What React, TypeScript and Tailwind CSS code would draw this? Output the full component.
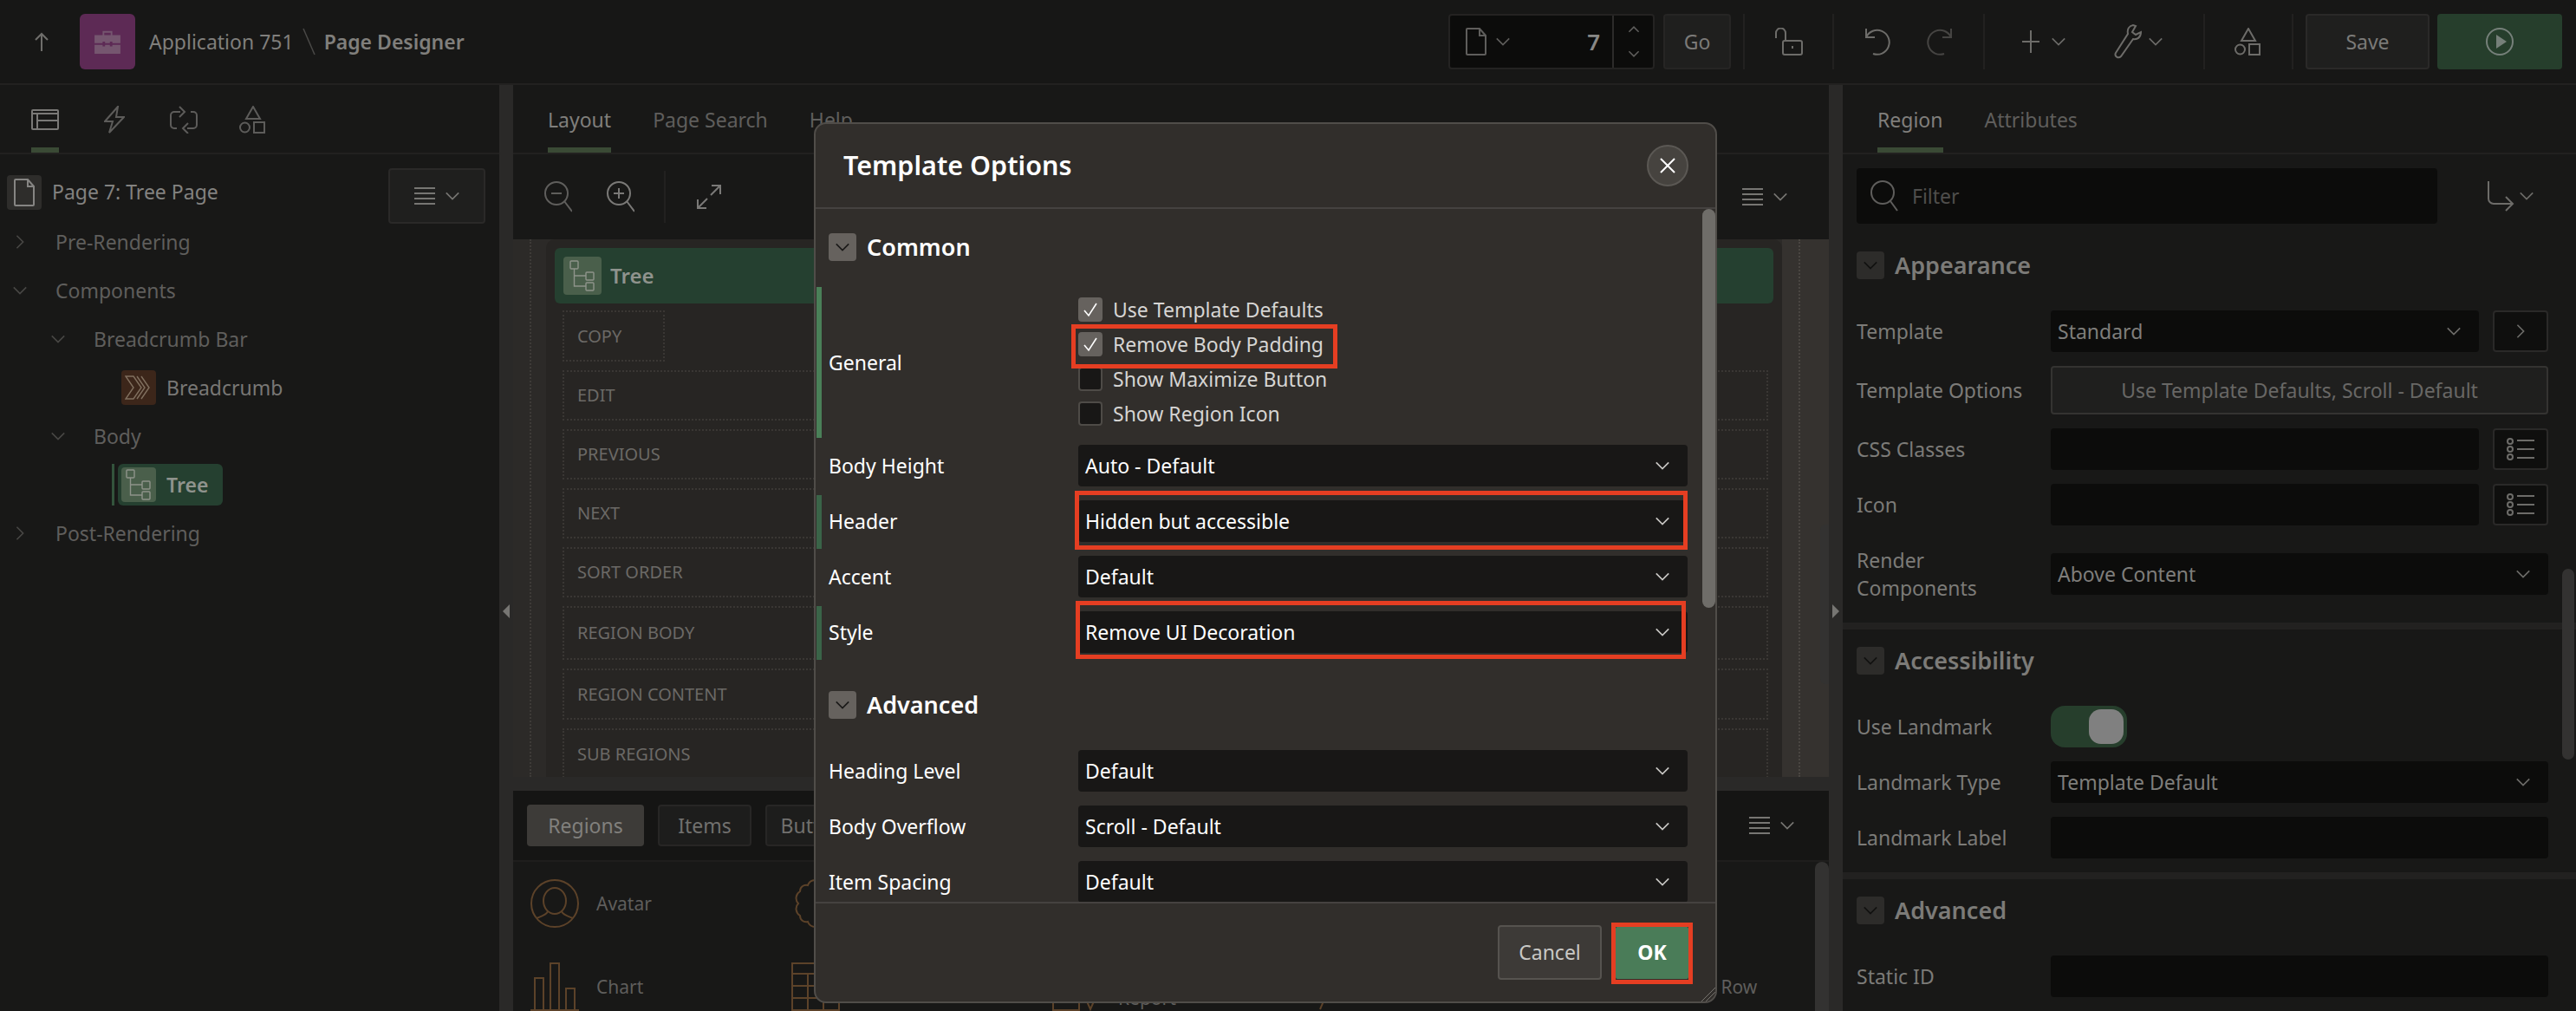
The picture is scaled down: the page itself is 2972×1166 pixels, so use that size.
import type { ReactNode } from "react";

function Chevron({ dir = "down", size = 18, className = "" }: { dir?: "down" | "up" | "right" | "left"; size?: number; className?: string }) {
  const d = {
    down: "M2 6l8 8 8-8",
    up: "M2 14l8-8 8 8",
    right: "M6 2l8 8-8 8",
    left: "M14 2l-8 8 8 8",
  }[dir];
  return (
    <svg width={size} height={size} viewBox="0 0 20 20" fill="none" stroke="currentColor" strokeWidth={size > 16 ? 1.8 : 2.2} className={`shrink-0 ${className}`}>
      <path d={d} />
    </svg>
  );
}

function MenuLines({ className = "" }: { className?: string }) {
  return (
    <svg width="24" height="22" viewBox="0 0 24 22" stroke="currentColor" strokeWidth="2" className={className}>
      <path d="M0 2h24M0 8h24M0 14h24M0 20h24" />
    </svg>
  );
}

function MenuButton({ className = "" }: { className?: string }) {
  return (
    <div className={`flex items-center gap-[11px] text-[#777673] ${className}`}>
      <MenuLines />
      <Chevron />
    </div>
  );
}

function Shapes({ className = "" }: { className?: string }) {
  return (
    <svg width="32" height="32" viewBox="0 0 32 32" fill="none" stroke="currentColor" strokeWidth="2" className={className}>
      <path d="M16 1l8 14H8z" />
      <circle cx="6.5" cy="25" r="5.5" />
      <rect x="17" y="19" width="12" height="12" />
    </svg>
  );
}

function PageGlyph({ className = "" }: { className?: string }) {
  return (
    <svg width="24" height="32" viewBox="0 0 24 32" fill="none" stroke="currentColor" strokeWidth="2" className={className}>
      <path d="M1 2a1 1 0 0 1 1-1h14l7 8v21a1 1 0 0 1-1 1H2a1 1 0 0 1-1-1zM16 1v8h7" />
    </svg>
  );
}

function TreeGlyph() {
  return (
    <svg width="30" height="36" viewBox="0 0 30 36" fill="none" stroke="#8f948b" strokeWidth="1.4">
      <rect x="1" y="1" width="9" height="9" rx="1" />
      <rect x="19" y="14" width="9" height="9" rx="1" />
      <rect x="19" y="26" width="9" height="9" rx="1" />
      <path d="M5.5 10v20H19M5.5 18H19" />
    </svg>
  );
}

function Sep() {
  return <div className="w-[2px] h-[64px] bg-[#222120] shrink-0" />;
}

function Header() {
  return (
    <header className="h-[98px] shrink-0 flex border-b-2 border-[#222120] bg-[#171716]">
      <div className="flex items-center h-[96px] pl-[40px]">
        <svg width="16" height="22" viewBox="0 0 16 22" fill="none" stroke="#6f6e6b" strokeWidth="2">
          <path d="M8 22V2M1 9l7-7 7 7" />
        </svg>
        <div className="ml-[36px] w-[64px] h-[64px] rounded-[6px] bg-[#5d2a55] flex items-center justify-center">
          <svg width="30" height="28" viewBox="0 0 32 30" fill="#75566f">
            <path d="M10 2h12v5h-2V4h-8v3h-2zM0 7h32v10h-10v-2h-3v2h-6v-2h-3v2H0zM0 19h10v2h3v-2h6v2h3v-2h10v11H0z" />
          </svg>
        </div>
        <span className="ml-[16px] text-[23px] text-[#807f7c]">Application 751</span>
        <svg width="18" height="32" viewBox="0 0 18 32" fill="none" stroke="#4a4947" strokeWidth="1.5" className="ml-[9px]">
          <path d="M2 1l13 30" />
        </svg>
        <span className="ml-[8px] text-[23px] font-semibold text-[#807f7c]">Page Designer</span>
      </div>
      <div className="ml-auto flex items-center h-[96px] pr-[16px]">
        <div className="w-[238px] h-[64px] flex rounded-[4px] border-2 border-[#242322] bg-[#0c0c0b]">
          <div className="w-[187px] flex items-center pl-[18px] text-[#5f5e5c]">
            <PageGlyph />
            <Chevron className="ml-[10px]" />
            <span className="ml-auto pr-[14px] text-[26px] font-semibold text-[#898886]">7</span>
          </div>
          <div className="flex-1 border-l-2 border-[#2c2b2a] flex flex-col items-center justify-center gap-[14px] text-[#5f5e5c]">
            <Chevron dir="up" size={14} />
            <Chevron size={14} />
          </div>
        </div>
        <div className="ml-[10px] w-[78px] h-[64px] rounded-[4px] border-2 border-[#262524] bg-[#1f1f1e] flex items-center justify-center text-[23px] text-[#7b7a78]">Go</div>
        <div className="ml-[14px]"><Sep /></div>
        <div className="w-[101px] flex justify-center">
          <svg width="32" height="32" viewBox="0 0 32 32" fill="none" stroke="#6d6c69" strokeWidth="2">
            <path d="M1 12V6a5.5 5.5 0 0 1 11 0v9" />
            <rect x="9" y="15" width="22" height="16" rx="2" />
            <path d="M20 21v3" />
          </svg>
        </div>
        <Sep />
        <div className="w-[172px] flex justify-center gap-[40px]">
          <svg width="30" height="32" viewBox="0 0 30 32" fill="none" stroke="#6d6c69" strokeWidth="2">
            <path d="M1 1v10h10M1 11A14 14 0 1 1 9 30" />
          </svg>
          <svg width="30" height="32" viewBox="0 0 30 32" fill="none" stroke="#454442" strokeWidth="2">
            <path d="M29 1v10H19M29 11A14 14 0 1 0 21 30" />
          </svg>
        </div>
        <Sep />
        <div className="w-[252px] flex items-center pl-[43px] text-[#6d6c69]">
          <svg width="20" height="28" viewBox="0 0 20 28" stroke="currentColor" strokeWidth="2"><path d="M10 1v26M0 14h20" /></svg>
          <Chevron className="ml-[13px]" />
          <svg width="32" height="40" viewBox="0 0 32 40" fill="none" stroke="currentColor" strokeWidth="2" className="ml-[55px]">
            <path d="M22 1c-5 1-7 5-6 10L2 33c-2 4 3 7 6 4l14-20c5 1 9-2 9-8l-6 3-4-3 4-7z" />
          </svg>
          <Chevron className="ml-[7px]" />
        </div>
        <Sep />
        <div className="w-[100px] flex justify-center text-[#6d6c69]"><Shapes /></div>
        <Sep />
        <div className="ml-[14px] w-[143px] h-[64px] rounded-[4px] border-2 border-[#2a2928] bg-[#1f1f1e] flex items-center justify-center text-[23px] text-[#7b7a78]">Save</div>
        <div className="ml-[9px] w-[144px] h-[64px] rounded-[4px] bg-[#263e2c] flex items-center justify-center">
          <svg width="32" height="32" viewBox="0 0 32 32" fill="none" stroke="#76807a" strokeWidth="2">
            <circle cx="16" cy="16" r="15" />
            <path d="M12 8l12 8-12 8z" fill="#76807a" stroke="none" />
          </svg>
        </div>
      </div>
    </header>
  );
}

function TreeRow({ indent, open, label }: { indent: number; open?: boolean; label: string }) {
  return (
    <div className="h-[56px] flex items-center text-[23px] text-[#5f5e5c]" style={{ paddingLeft: indent }}>
      <Chevron dir={open ? "down" : "right"} className="text-[#484745]" />
      <span className="ml-[32px]">{label}</span>
    </div>
  );
}

function LeftPanel() {
  return (
    <aside className="w-[576px] shrink-0 flex flex-col bg-[#181817]">
      <div className="h-[80px] shrink-0 flex border-b-2 border-[#222120] pl-[36px] text-[#5d5c5a]">
        <div className="w-[32px] h-[78px] relative pt-[28px]">
          <svg width="32" height="24" viewBox="0 0 32 24" fill="none" stroke="#7a7977" strokeWidth="2">
            <rect x="1" y="1" width="30" height="22" rx="1" />
            <path d="M1 5h30M7 5v18M7 13h24" />
          </svg>
          <div className="absolute left-0 right-0 bottom-0 h-[6px] bg-[#3a4a35]" />
        </div>
        <svg width="24" height="32" viewBox="0 0 24 32" fill="none" stroke="currentColor" strokeWidth="2" className="ml-[52px] mt-[24px]">
          <path d="M16 1L1 18h9L6 31l17-18h-9z" />
        </svg>
        <svg width="32" height="32" viewBox="0 0 32 32" fill="none" stroke="currentColor" strokeWidth="2" className="ml-[52px] mt-[24px]">
          <path d="M12 7H5a4 4 0 0 0-4 4v11a4 4 0 0 0 4 4h3M20 26h7a4 4 0 0 0 4-4V11a4 4 0 0 0-4-4h-3M11 1l6 6-6 6M21 20l-6 6 6 6" />
        </svg>
        <Shapes className="ml-[48px] mt-[24px]" />
      </div>
      <div>
        <div className="h-[73px] flex pt-[16px] pl-[8px] pr-[16px]">
          <div className="w-[40px] h-[40px] mt-[8px] rounded-[4px] bg-[#2e2d2b] flex items-center justify-center text-[#868583]">
            <PageGlyph />
          </div>
          <span className="ml-[12px] mt-[10px] text-[23px] text-[#838280]">Page 7: Tree Page</span>
          <div className="ml-auto w-[112px] h-[64px] rounded-[4px] border-2 border-[#2a2928] bg-[#1f1f1e] flex items-center justify-center">
            <MenuButton />
          </div>
        </div>
        <TreeRow indent={14} label="Pre-Rendering" />
        <TreeRow indent={14} open label="Components" />
        <TreeRow indent={58} open label="Breadcrumb Bar" />
        <div className="h-[56px] flex items-center pl-[140px]">
          <div className="w-[40px] h-[40px] rounded-[4px] bg-[#3c261a] flex items-center justify-center">
            <svg width="32" height="30" viewBox="0 0 32 30" fill="none" stroke="#80705f" strokeWidth="1.4">
              <path d="M1 2h9l9 13-9 13H1l9-13zM14 2l9 13-9 13M19 2l9 13-9 13" />
            </svg>
          </div>
          <span className="ml-[12px] text-[23px] text-[#787775]">Breadcrumb</span>
        </div>
        <TreeRow indent={58} open label="Body" />
        <div className="h-[56px] flex items-center pl-[129px]">
          <div className="w-[3px] h-[48px] bg-[#33543c]" />
          <div className="ml-[4px] w-[121px] h-[48px] rounded-[6px] bg-[#254030] flex items-center pl-[4px]">
            <div className="w-[40px] h-[40px] rounded-[4px] bg-[#4a5f4b] flex items-center justify-center">
              <TreeGlyph />
            </div>
            <span className="ml-[12px] text-[23px] font-semibold text-[#8f938d]">Tree</span>
          </div>
        </div>
        <TreeRow indent={14} label="Post-Rendering" />
      </div>
    </aside>
  );
}

function Splitter({ dir }: { dir: "left" | "right" }) {
  return (
    <div className="w-[16px] shrink-0 bg-[#2a2928] relative">
      <svg width="8" height="16" viewBox="0 0 8 16" className="absolute top-[599px] left-[4px]">
        <path d={dir === "left" ? "M8 0v16L0 8z" : "M0 0v16l8-8z"} fill="#777673" />
      </svg>
    </div>
  );
}

const slots: [string, string][] = [
  ["EDIT", "h-[58px]"],
  ["PREVIOUS", "h-[58px]"],
  ["NEXT", "h-[58px]"],
  ["SORT ORDER", "h-[58px]"],
  ["REGION BODY", "h-[62px]"],
  ["REGION CONTENT", "h-[59px]"],
  ["SUB REGIONS", "h-[60px]"],
];

function Slot({ label, className = "" }: { label: string; className?: string }) {
  return (
    <div className={`shrink-0 flex items-center pl-[15px] border-2 border-dotted border-[#3a3734] text-[20px] text-[#6b6966] ${className}`}>
      {label}
    </div>
  );
}

function GalleryItem({ label, icon, extra = "" }: { label?: ReactNode; icon?: ReactNode; extra?: string }) {
  return (
    <div className="w-[301px] h-[96px] shrink-0 flex items-center pl-[20px]">
      <div className="w-[56px] h-[56px] shrink-0 text-[#5c4229]">{icon}</div>
      {label && <span className={`ml-[20px] text-[21px] leading-[26px] text-[#5f5e5c] ${extra}`}>{label}</span>}
    </div>
  );
}

function CenterPanel() {
  return (
    <main className="w-[1518px] shrink-0 flex flex-col bg-[#181817]">
      <div className="h-[80px] shrink-0 flex border-b-2 border-[#222120] pl-[40px] text-[23px] text-[#5f5e5c]">
        <div className="relative h-[78px] flex items-center pt-[2px] text-[#807f7c]">
          Layout
          <div className="absolute left-0 right-0 bottom-0 h-[6px] bg-[#3a4a35]" />
        </div>
        <span className="ml-[48px] mt-[23px]">Page Search</span>
        <span className="ml-[48px] mt-[23px]">Help</span>
      </div>
      <div className="h-[98px] shrink-0 flex items-center pl-[36px] text-[#5f5e5c]">
        <svg width="32" height="36" viewBox="0 0 32 36" fill="none" stroke="currentColor" strokeWidth="2">
          <circle cx="14" cy="14" r="13" /><path d="M23 23l9 12M8 14h12" />
        </svg>
        <svg width="32" height="36" viewBox="0 0 32 36" fill="none" stroke="#7a7977" strokeWidth="2" className="ml-[40px]">
          <circle cx="14" cy="14" r="13" /><path d="M23 23l9 12M8 14h12M14 8v12" />
        </svg>
        <div className="ml-[34px] w-[2px] h-[60px] bg-[#222120]" />
        <svg width="28" height="28" viewBox="0 0 28 28" fill="none" stroke="#7a7977" strokeWidth="2" className="ml-[36px]">
          <path d="M17 1h10v10M27 1L16 12M1 17v10h10M1 27l11-11" />
        </svg>
        <MenuButton className="ml-auto mr-[47px]" />
      </div>
      <div className="h-[620px] shrink-0 flex bg-[#2c2a28] relative overflow-hidden">
        <div className="w-[38px] shrink-0 pl-[19px]"><div className="h-full border-l-2 border-dotted border-[#3e3b38]" /></div>
        <div className="w-[1426px] shrink-0 bg-[#272523] rounded-t-[10px] pt-[10px] pl-[10px] pr-[10px] flex flex-col">
          <div className="h-[64px] shrink-0 rounded-[6px] bg-[#254030] flex items-center pl-[10px]">
            <div className="w-[44px] h-[44px] rounded-[4px] bg-[#4a5f4b] flex items-center justify-center"><TreeGlyph /></div>
            <span className="ml-[10px] text-[24px] font-semibold text-[#8f938d]">Tree</span>
          </div>
          <div className="mt-[8px] pl-[9px] pr-[6px] flex flex-col gap-[10px]">
            <Slot label="COPY" className="w-[118px] h-[59px]" />
            {slots.map(([label, h]) => (
              <Slot key={label} label={label} className={h} />
            ))}
          </div>
        </div>
        <div className="flex-1 pl-[19px] bg-[#35322f]"><div className="h-full border-l-2 border-dotted border-[#4a4642]" /></div>
        <div className="absolute right-0 top-[329px] w-[10px] h-[184px] rounded-l-[6px] bg-[#333231]" />
      </div>
      <div className="h-[16px] shrink-0 bg-[#2a2928]" />
      <div className="h-[82px] shrink-0 flex items-center pl-[16px] border-b-2 border-[#1f1e1d] text-[23px] bg-[#151514]">
        <div className="w-[135px] h-[48px] rounded-[4px] bg-[#3d3b38] flex items-center justify-center text-[#81807d]">Regions</div>
        <div className="ml-[16px] w-[108px] h-[48px] rounded-[4px] border-2 border-[#272625] bg-[#1d1d1c] flex items-center justify-center text-[#71706e]">Items</div>
        <div className="ml-[16px] w-[120px] h-[48px] rounded-[4px] border-2 border-[#272625] bg-[#1d1d1c] flex items-center justify-center text-[#71706e]">Buttons</div>
        <MenuButton className="ml-auto mr-[39px]" />
      </div>
      <div className="relative flex-1 flex flex-wrap content-start overflow-hidden">
        <GalleryItem label="Avatar" icon={
          <svg viewBox="0 0 56 56" fill="none" stroke="currentColor" strokeWidth="2"><circle cx="28" cy="28" r="27" /><ellipse cx="28" cy="25" rx="13" ry="15" /><path d="M20 37c-1 4-8 6-13 8M36 37c1 4 8 6 13 8" /></svg>
        } />
        <GalleryItem icon={
          <svg viewBox="0 0 56 56" fill="none" stroke="currentColor" strokeWidth="2"><path d="M28 1c5 0 8 3 9 6 5-1 9 2 9 7 5 3 6 10 2 14 4 4 3 11-2 14 0 5-4 8-9 7-1 3-4 6-9 6s-8-3-9-6c-5 1-9-2-9-7-5-3-6-10-2-14-4-4-3-11 2-14 0-5 4-8 9-7 1-3 4-6 9-6z" /></svg>
        } />
        <GalleryItem />
        <GalleryItem />
        <GalleryItem />
        <GalleryItem label="Chart" icon={
          <svg viewBox="0 0 56 56" fill="none" stroke="currentColor" strokeWidth="2"><path d="M0 55h56M5 55V18h10v37M23 55V1h10v54M41 55V30h10v25" /></svg>
        } />
        <GalleryItem icon={
          <svg viewBox="0 0 56 56" fill="none" stroke="currentColor" strokeWidth="2"><rect x="1" y="1" width="54" height="54" /><path d="M1 13h54M1 27h54M1 41h54M19 13v42M37 13v42" /></svg>
        } />
        <GalleryItem label={<>Interactive<br />Report</>} icon={
          <svg viewBox="0 0 56 56" fill="none" stroke="currentColor" strokeWidth="2"><rect x="1" y="1" width="30" height="54" /><path d="M36 36l8 18 8-18" /></svg>
        } />
        <GalleryItem icon={
          <svg viewBox="0 0 56 56" fill="none" stroke="currentColor" strokeWidth="2"><path d="M8 54l6-14" /></svg>
        } />
        <GalleryItem label="Content Row" extra="whitespace-nowrap translate-x-[9px]" />
        <div className="absolute right-0 top-0 bottom-0 w-[16px] rounded-t-[8px] bg-[#333231]" />
      </div>
    </main>
  );
}

function Label({ children }: { children: ReactNode }) {
  return <div className="w-[224px] shrink-0 text-[23px] leading-[32px] text-[#7c7b78]">{children}</div>;
}

function Field({ value }: { value?: string }) {
  return (
    <div className="flex-1 h-[48px] rounded-[4px] bg-[#0c0c0b] flex items-center pl-[8px] pr-[20px] text-[23px] text-[#7f7e7b]">
      {value}
      {value && <Chevron className="ml-auto text-[#6d6c69]" />}
    </div>
  );
}

function ListBtn() {
  return (
    <div className="ml-[16px] w-[64px] h-[48px] shrink-0 rounded-[4px] border-2 border-[#2a2928] bg-[#0f0f0e] flex items-center justify-center">
      <svg width="32" height="26" viewBox="0 0 32 26" fill="none" stroke="#6d6c69" strokeWidth="2">
        <circle cx="4" cy="4" r="3" /><circle cx="4" cy="13" r="3" /><circle cx="4" cy="22" r="3" />
        <path d="M12 3h20M12 13h20M12 23h20" />
      </svg>
    </div>
  );
}

function Section({ label }: { label: string }) {
  return (
    <div className="flex items-center h-[32px] pl-[16px]">
      <div className="w-[32px] h-[32px] rounded-[4px] bg-[#2d2c2a] flex items-center justify-center text-[#111110]"><Chevron /></div>
      <span className="ml-[12px] text-[27px] font-semibold text-[#7c7b78]">{label}</span>
    </div>
  );
}

function PropRow({ label, children, className = "" }: { label: ReactNode; children: ReactNode; className?: string }) {
  return (
    <div className={`flex items-center pl-[16px] pr-[32px] ${className}`}>
      <Label>{label}</Label>
      {children}
    </div>
  );
}

function RightPanel() {
  return (
    <aside className="flex-1 relative flex flex-col bg-[#181817] overflow-hidden">
      <div className="h-[80px] shrink-0 flex border-b-2 border-[#222120] pl-[40px] text-[23px] text-[#5f5e5c]">
        <div className="relative h-[78px] flex items-center pt-[2px] text-[#807f7c]">
          Region
          <div className="absolute left-0 right-0 bottom-0 h-[6px] bg-[#3a4a35]" />
        </div>
        <span className="ml-[48px] mt-[23px]">Attributes</span>
      </div>
      <div className="mt-[16px] flex items-center pl-[16px]">
        <div className="w-[670px] h-[64px] rounded-[4px] bg-[#0c0c0b] flex items-center pl-[16px] text-[23px] text-[#4f4e4c]">
          <svg width="32" height="36" viewBox="0 0 32 36" fill="none" stroke="#5f5e5c" strokeWidth="2">
            <circle cx="14" cy="14" r="13" /><path d="M23 24l8 11" />
          </svg>
          <span className="ml-[16px]">Filter</span>
        </div>
        <svg width="32" height="36" viewBox="0 0 32 36" fill="none" stroke="#6d6c69" strokeWidth="2" className="ml-[57px]">
          <path d="M2 1v20a6 6 0 0 0 6 6h22M22 19l8 8-8 8" />
        </svg>
        <Chevron className="ml-[5px] text-[#6d6c69]" />
      </div>
      <div className="mt-[32px]"><Section label="Appearance" /></div>
      <div className="mt-[36px] flex flex-col gap-[16px]">
        <PropRow label="Template">
          <Field value="Standard" />
          <div className="ml-[16px] w-[64px] h-[48px] shrink-0 rounded-[4px] border-2 border-[#2a2928] bg-[#0f0f0e] flex items-center justify-center text-[#6d6c69]"><Chevron dir="right" /></div>
        </PropRow>
        <PropRow label="Template Options">
          <div className="flex-1 h-[56px] rounded-[4px] border-2 border-[#343331] bg-[#1f1f1e] flex items-center justify-center text-[23px] text-[#686765]">Use Template Defaults, Scroll - Default</div>
        </PropRow>
        <PropRow label="CSS Classes"><Field /><ListBtn /></PropRow>
        <PropRow label="Icon"><Field /><ListBtn /></PropRow>
        <PropRow label={<>Render<br />Components</>} className="h-[64px] mt-[8px]"><Field value="Above Content" /></PropRow>
      </div>
      <div className="mt-[24px] h-[8px] bg-[#222120]" />
      <div className="mt-[20px]"><Section label="Accessibility" /></div>
      <div className="mt-[36px] flex flex-col gap-[16px]">
        <PropRow label="Use Landmark">
          <div className="w-[88px] h-[48px] rounded-[16px] bg-[#263e2c] flex items-center justify-end pr-[4px]">
            <div className="w-[40px] h-[40px] rounded-[14px] bg-[#808080]" />
          </div>
        </PropRow>
        <PropRow label="Landmark Type"><Field value="Template Default" /></PropRow>
        <PropRow label="Landmark Label"><Field /></PropRow>
      </div>
      <div className="mt-[16px] h-[8px] bg-[#222120]" />
      <div className="mt-[20px]"><Section label="Advanced" /></div>
      <div className="mt-[36px]">
        <PropRow label="Static ID"><Field /></PropRow>
      </div>
      <div className="absolute right-[2px] top-[558px] w-[14px] h-[220px] rounded-full bg-[#333231]" />
    </aside>
  );
}

function Box({ className = "" }: { className?: string }) {
  return <div className={`absolute border-[5px] border-[#e53e22] pointer-events-none ${className}`} />;
}

function ModalHeading({ label }: { label: string }) {
  return (
    <div className="flex items-center h-[32px] pl-[15px]">
      <div className="w-[32px] h-[32px] rounded-[4px] bg-[#66625e] flex items-center justify-center text-[#1a1918]"><Chevron /></div>
      <span className="ml-[12px] text-[27px] font-semibold text-white">{label}</span>
    </div>
  );
}

function Check({ label, checked }: { label: string; checked?: boolean }) {
  return (
    <div className="h-[40px] flex items-center">
      {checked ? (
        <div className="w-[28px] h-[28px] rounded-[4px] bg-[#66625e] flex items-center justify-center">
          <svg width="18" height="18" viewBox="0 0 18 18" fill="none" stroke="#fff" strokeWidth="1.6"><path d="M2 10l5 6L16 2" /></svg>
        </div>
      ) : (
        <div className="w-[28px] h-[28px] rounded-[4px] bg-[#181716] border-2 border-[#4e4b47]" />
      )}
      <span className="ml-[12px] text-[23px] text-[#d6d5d3]">{label}</span>
    </div>
  );
}

function OptionRow({ label, value, mark, box }: { label: string; value: string; mark?: boolean; box?: string }) {
  return (
    <div className="relative h-[64px] shrink-0 flex items-center pl-[15px] pr-[32px]">
      {mark && <div className="absolute left-[1px] top-[2px] bottom-0 w-[6px] bg-[#3a6448]" />}
      <span className="w-[288px] shrink-0 text-[23px] text-white">{label}</span>
      <div className="relative flex-1 h-[48px] rounded-[4px] bg-[#181716] flex items-center pl-[8px] pr-[20px] text-[23px] text-white">
        {value}
        <Chevron className="ml-auto text-[#c9c8c5]" />
        {box && <Box className={box} />}
      </div>
    </div>
  );
}

function Modal() {
  return (
    <div className="absolute left-[939px] top-[141px] w-[1042px] h-[1016px] flex flex-col rounded-[14px] border-2 border-[#504d49] bg-[#312e2b] overflow-hidden">
      <div className="h-[98px] shrink-0 border-b-2 border-[#454240] flex items-center pl-[32px] pr-[31px]">
        <h2 className="text-[30.5px] font-semibold text-white">Template Options</h2>
        <div className="ml-auto w-[48px] h-[48px] rounded-full bg-[#46433f] border-2 border-[#5b5854] flex items-center justify-center">
          <svg width="20" height="20" viewBox="0 0 20 20" stroke="#fff" strokeWidth="2"><path d="M2 2l16 16M18 2L2 18" /></svg>
        </div>
      </div>
      <div className="relative flex-1 overflow-hidden pt-[28px]">
        <ModalHeading label="Common" />
        <div className="relative mt-[30px] h-[174px] flex items-center pl-[15px] pr-[32px]">
          <div className="absolute left-[1px] top-0 bottom-0 w-[6px] bg-[#4a8058]" />
          <span className="w-[288px] shrink-0 text-[23px] text-white">General</span>
          <div className="relative mt-[-2px]">
            <Check label="Use Template Defaults" checked />
            <div className="relative">
              <Check label="Remove Body Padding" checked />
              <Box className="-left-[8px] -right-[12px] -top-[3px] -bottom-[8px]" />
            </div>
            <Check label="Show Maximize Button" />
            <Check label="Show Region Icon" />
          </div>
        </div>
        <OptionRow label="Body Height" value="Auto - Default" />
        <OptionRow label="Header" value="Hidden but accessible" mark box="-left-[4px] right-0 -top-[11px] -bottom-[9px]" />
        <OptionRow label="Accent" value="Default" />
        <OptionRow label="Style" value="Remove UI Decoration" mark box="-left-[3px] right-[2px] -top-[12px] -bottom-[7px]" />
        <div className="mt-[36px]"><ModalHeading label="Advanced" /></div>
        <div className="mt-[28px]" />
        <OptionRow label="Heading Level" value="Default" />
        <OptionRow label="Body Overflow" value="Scroll - Default" />
        <OptionRow label="Item Spacing" value="Default" />
        <div className="absolute right-0 top-0 w-[15px] h-[460px] rounded-full bg-[#6f6d69]" />
      </div>
      <div className="h-[115px] shrink-0 border-t-2 border-[#454240] flex items-center justify-end pr-[31px] relative">
        <div className="w-[120px] h-[63px] rounded-[4px] border-2 border-[#56534f] bg-[#3d3a37] flex items-center justify-center text-[23px] text-[#c9c8c5]">Cancel</div>
        <div className="relative ml-[16px] w-[84px] h-[60px] rounded-[2px] bg-[#4a7c58] flex items-center justify-center text-[23px] font-bold text-white">
          OK
          <Box className="-left-[5px] -right-[5px] -top-[5px] -bottom-[6px]" />
        </div>
        <svg width="16" height="16" viewBox="0 0 16 16" stroke="#77746f" strokeWidth="1" className="absolute right-0 bottom-0">
          <path d="M0 16L16 0M5 16L16 5M10 16l6-6" />
        </svg>
      </div>
    </div>
  );
}

export default function App() {
  return (
    <div className="relative w-[2972px] h-[1166px] overflow-hidden flex flex-col bg-[#181817] font-['Noto_Sans',sans-serif]">
      <Header />
      <div className="flex-1 flex min-h-0">
        <LeftPanel />
        <Splitter dir="left" />
        <CenterPanel />
        <Splitter dir="right" />
        <RightPanel />
      </div>
      <Modal />
    </div>
  );
}
